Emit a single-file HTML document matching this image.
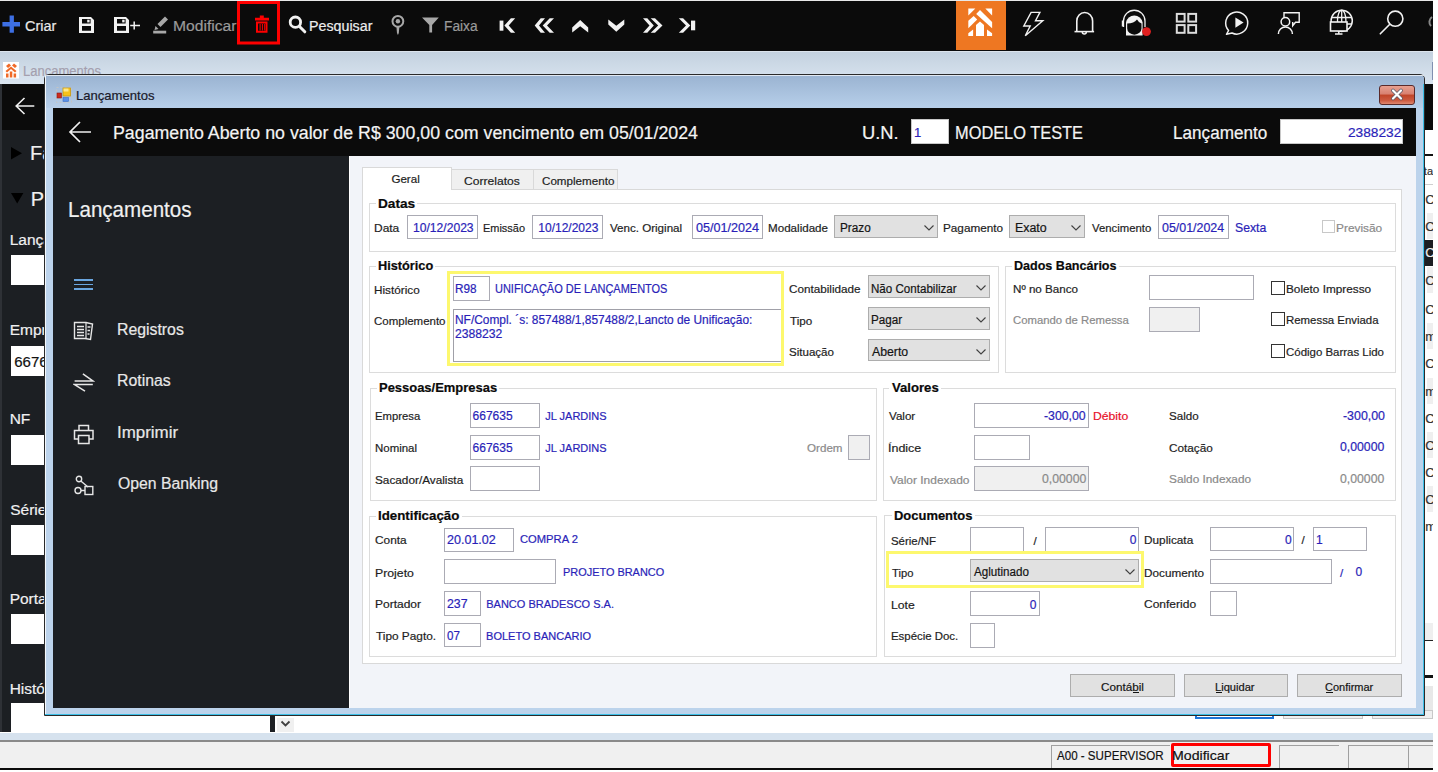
<!DOCTYPE html>
<html><head><meta charset="utf-8"><style>
html,body{margin:0;padding:0;}
body{width:1438px;height:772px;position:relative;overflow:hidden;background:#ffffff;font-family:"Liberation Sans",sans-serif;}
.t{position:absolute;white-space:nowrap;line-height:1;transform-origin:0 0;-webkit-text-stroke:0.2px currentColor;}
.b{position:absolute;box-sizing:border-box;}
</style></head><body>

<div class="b" style="left:0px;top:0px;width:1438px;height:1px;background:#e8e8e8;"></div>
<div class="b" style="left:0px;top:1px;width:1433px;height:50px;background:#0b0b0b;"></div>
<div class="b" style="left:0px;top:51px;width:1433px;height:33px;background:linear-gradient(#c3d1df,#dae5f0);"></div>
<div class="b" style="left:0px;top:51px;width:1433px;height:1px;background:#dce4ec;"></div>
<div class="b" style="left:0px;top:84px;width:1433px;height:648px;background:#ffffff;"></div>
<div class="b" style="left:0px;top:84px;width:44px;height:46px;background:#0b0b0b;"></div>
<div class="b" style="left:0px;top:130px;width:44px;height:602px;background:#1c1f23;"></div>
<div class="b" style="left:0px;top:84px;width:2px;height:648px;background:#2e3136;"></div>
<div class="b" style="left:1425px;top:84px;width:8px;height:46px;background:#0b0b0b;"></div>
<div class="b" style="left:0px;top:733px;width:1433px;height:7px;background:#d6e2ee;"></div>
<div class="b" style="left:0px;top:740px;width:1433px;height:2px;background:#8a8a8a;"></div>
<div class="b" style="left:0px;top:742px;width:1433px;height:26px;background:#f0f0f0;"></div>
<div class="b" style="left:0px;top:768px;width:1433px;height:2px;background:#0b0b0b;"></div>
<svg class="b" style="left:3px;top:62px" width="17" height="17" viewBox="0 0 17 17"><rect x="0" y="0" width="16" height="16.5" fill="#ffffff"/><path d="M3 4 L6 1.5 L8 3.5 L5 6 Z M9 3.5 L11 1.5 L14 4 L12 6 Z M2.5 9 L8 4.5 L13.5 9 L12 10.5 L8 7 L4 10.5 Z M3 11.5h2.5v4H3z M6.8 9.5h2.5v6H6.8z M10.6 11.5h2.5v4h-2.5z" fill="#f06a28"/></svg>
<div class="t" style="left:23.36px;top:64.40px;font-size:14px;color:#a49fae;transform:scaleX(0.9289);">Lançamentos</div>
<svg class="b" style="left:14px;top:96px" width="22" height="20" viewBox="0 0 22 20"><path d="M2.2 10 H20.3 M10.5 2 L2.2 10 L10.5 18" fill="none" stroke="#f0f0f0" stroke-width="1.6"/></svg>
<svg class="b" style="left:11px;top:147px" width="12" height="13" viewBox="0 0 12 13"><path d="M0 0 L11 6.3 L0 12.6 Z" fill="#000000"/></svg>
<div class="t" style="left:30.10px;top:143.30px;font-size:20px;color:#f0f0f0;">Faturas</div>
<svg class="b" style="left:11px;top:193px" width="13" height="11" viewBox="0 0 13 11"><path d="M0 0 H12.4 L6.2 10.5 Z" fill="#000000"/></svg>
<div class="t" style="left:30.80px;top:189.00px;font-size:20px;color:#f0f0f0;">Pesquisa</div>
<div class="t" style="left:9.66px;top:232.12px;font-size:15.5px;color:#f0f0f0;">Lançamento</div>
<div class="t" style="left:9.66px;top:322.22px;font-size:15.5px;color:#f0f0f0;">Empresa</div>
<div class="t" style="left:9.66px;top:411.43px;font-size:15.5px;color:#f0f0f0;">NF</div>
<div class="t" style="left:10.20px;top:501.53px;font-size:15.5px;color:#f0f0f0;">Série</div>
<div class="t" style="left:9.66px;top:590.53px;font-size:15.5px;color:#f0f0f0;">Portador</div>
<div class="t" style="left:9.66px;top:680.62px;font-size:15.5px;color:#f0f0f0;">Histórico</div>
<div class="b" style="left:11px;top:255px;width:40px;height:30px;background:#ffffff;"></div>
<div class="b" style="left:11px;top:346px;width:40px;height:30px;background:#ffffff;"></div>
<div class="b" style="left:11px;top:435px;width:40px;height:30px;background:#ffffff;"></div>
<div class="b" style="left:11px;top:525px;width:40px;height:30px;background:#ffffff;"></div>
<div class="b" style="left:11px;top:614px;width:40px;height:30px;background:#ffffff;"></div>
<div class="t" style="left:14.25px;top:353.75px;font-size:15px;color:#111111;">667635</div>
<div class="b" style="left:11px;top:703px;width:259px;height:29px;background:#ffffff;"></div>
<div class="b" style="left:270px;top:715px;width:5px;height:17px;background:#1c1f23;"></div>
<div class="b" style="left:277px;top:718px;width:17px;height:14px;background:#f0f0f0;"></div>
<svg class="b" style="left:280px;top:720px" width="11" height="8" viewBox="0 0 11 8"><path d="M1.5 1.5 L5.5 5.5 L9.5 1.5" fill="none" stroke="#404040" stroke-width="1.8"/></svg>
<div class="b" style="left:1195px;top:710px;width:79px;height:9px;background:transparent;border:2px solid #1a73d9;"></div>
<div class="b" style="left:1283px;top:710px;width:80px;height:9px;background:#f0f0f0;border:1px solid #c8c8c8;"></div>
<div class="b" style="left:1372px;top:710px;width:61px;height:9px;background:#f0f0f0;border:1px solid #c8c8c8;"></div>
<div class="b" style="left:1425px;top:154px;width:8px;height:2px;background:#111111;"></div>
<div class="t" style="left:1423.84px;top:166.35px;font-size:11px;color:#333333;">ta</div>
<div class="b" style="left:1425px;top:184px;width:8px;height:1px;background:#cfcfcf;"></div>
<div class="t" style="left:1425.35px;top:192.95px;font-size:13px;color:#333333;">C</div>
<div class="b" style="left:1427px;top:213px;width:6px;height:26px;background:#efefef;"></div>
<div class="t" style="left:1425.35px;top:219.95px;font-size:13px;color:#333333;">C</div>
<div class="b" style="left:1425px;top:240px;width:8px;height:26px;background:#1c1f23;"></div>
<div class="t" style="left:1425.35px;top:245.95px;font-size:13px;color:#f0f0f0;">C</div>
<div class="b" style="left:1427px;top:267px;width:6px;height:26px;background:#efefef;"></div>
<div class="t" style="left:1425.35px;top:273.95px;font-size:13px;color:#333333;">C</div>
<div class="t" style="left:1425.35px;top:302.95px;font-size:13px;color:#333333;">C</div>
<div class="b" style="left:1427px;top:323px;width:6px;height:26px;background:#efefef;"></div>
<div class="t" style="left:1425.15px;top:329.95px;font-size:13px;color:#333333;">m</div>
<div class="t" style="left:1425.35px;top:356.95px;font-size:13px;color:#333333;">C</div>
<div class="b" style="left:1427px;top:378px;width:6px;height:26px;background:#efefef;"></div>
<div class="t" style="left:1425.15px;top:384.95px;font-size:13px;color:#333333;">m</div>
<div class="t" style="left:1425.35px;top:411.95px;font-size:13px;color:#333333;">C</div>
<div class="b" style="left:1427px;top:432px;width:6px;height:26px;background:#efefef;"></div>
<div class="t" style="left:1425.35px;top:438.95px;font-size:13px;color:#333333;">C</div>
<div class="t" style="left:1425.35px;top:465.95px;font-size:13px;color:#333333;">C</div>
<div class="b" style="left:1427px;top:486px;width:6px;height:26px;background:#efefef;"></div>
<div class="t" style="left:1425.35px;top:492.95px;font-size:13px;color:#333333;">C</div>
<div class="t" style="left:1425.15px;top:519.95px;font-size:13px;color:#333333;">m</div>
<div class="b" style="left:1425px;top:623px;width:8px;height:17px;background:#efefef;"></div>
<div class="b" style="left:1425px;top:640px;width:8px;height:1px;background:#222222;"></div>
<div class="b" style="left:1425px;top:675px;width:8px;height:3px;background:#111111;"></div>
<div class="b" style="left:1425px;top:686px;width:8px;height:24px;background:#e8e8e8;"></div>
<div class="b" style="left:1051px;top:745px;width:119px;height:23px;background:transparent;border:none;border-left:1px solid #a0a0a0;border-top:1px solid #a0a0a0;"></div>
<div class="t" style="left:1057.00px;top:748.52px;font-size:13.5px;color:#111111;transform:scaleX(0.8572);">A00 - SUPERVISOR</div>
<div class="b" style="left:1171px;top:743px;width:100px;height:24px;background:transparent;border:3px solid #ff0000;border-radius:2px;"></div>
<div class="t" style="left:1171.87px;top:748.52px;font-size:13.5px;color:#111111;transform:scaleX(1.0475);">Modificar</div>
<div class="b" style="left:1279px;top:745px;width:1px;height:23px;background:#a0a0a0;"></div>
<div class="b" style="left:1279px;top:745px;width:60px;height:1px;background:#a0a0a0;"></div>
<div class="b" style="left:1348px;top:745px;width:1px;height:23px;background:#a0a0a0;"></div>
<div class="b" style="left:1348px;top:745px;width:60px;height:1px;background:#a0a0a0;"></div>
<div class="b" style="left:1408px;top:745px;width:1px;height:23px;background:#a0a0a0;"></div>
<div class="b" style="left:1408px;top:745px;width:60px;height:1px;background:#a0a0a0;"></div>
<div class="b" style="left:44px;top:74px;width:1381px;height:642px;background:#bcd3ec;border:1px solid #2a2a2a;border-radius:5px 5px 0 0;"></div>
<div class="b" style="left:45px;top:75px;width:1379px;height:33px;background:linear-gradient(#9ab3d1,#b7cfea);border-radius:4px 4px 0 0;"></div>
<div class="b" style="left:45px;top:75px;width:1379px;height:1px;background:rgba(255,255,255,0.7);border-radius:4px 4px 0 0;"></div>
<div class="b" style="left:1423px;top:84px;width:1px;height:631px;background:#3cc0e8;"></div>
<div class="b" style="left:45px;top:714px;width:1379px;height:1px;background:#3cc0e8;"></div>
<div class="b" style="left:45px;top:76px;width:1px;height:638px;background:#f4f8fc;"></div>
<div class="b" style="left:1432px;top:62px;width:1px;height:18px;background:#8090b0;"></div>
<div class="b" style="left:53px;top:108px;width:1363px;height:48px;background:#0b0b0b;"></div>
<div class="b" style="left:53px;top:156px;width:296px;height:552px;background:#1c1f23;"></div>
<div class="b" style="left:349px;top:156px;width:1067px;height:552px;background:#f2f4f9;"></div>
<div class="b" style="left:349px;top:156px;width:1px;height:552px;background:#ffffff;"></div>
<div class="t" style="left:25.08px;top:18.70px;font-size:14px;color:#e8e8e8;transform:scaleX(1.0340);">Criar</div>
<div class="t" style="left:173.25px;top:18.70px;font-size:14px;color:#9a9a9a;transform:scaleX(1.1183);">Modificar</div>
<div class="b" style="left:236.5px;top:1px;width:43.5px;height:44px;background:#0b0b0b;"></div>
<div class="t" style="left:309.16px;top:18.70px;font-size:14px;color:#ededed;transform:scaleX(1.0181);">Pesquisar</div>
<div class="t" style="left:443.90px;top:18.70px;font-size:14px;color:#9a9a9a;transform:scaleX(0.9816);">Faixa</div>
<svg class="b" style="left:0;top:0" width="1438" height="50" viewBox="0 0 1438 50"><path d="M9.6 15.6h4.3v17.2h-4.3z M2.4 22.1h17.6v4.3H2.4z" fill="#3d6fe4"/><path fill="#f2f2f2" fill-rule="evenodd" d="M79 17h12l3 3v13h-15z M82 19v4.6h8.6v-4.6z M82 26v4.7h9v-4.7z"/><rect x="87.2" y="19.7" width="2.4" height="2.7" fill="#f2f2f2"/><path fill="#f2f2f2" fill-rule="evenodd" d="M114 17h12l3 3v13h-15z M117 19v4.6h8.6v-4.6z M117 26v4.7h9v-4.7z"/><rect x="122.2" y="19.7" width="2.4" height="2.7" fill="#f2f2f2"/><path d="M134.2 21.5v8 M130.2 25.5h9.8" stroke="#f2f2f2" stroke-width="1.5"/><path d="M157.5 24 L165 16.5 L168 19.5 L160.5 27 Z" fill="#a8a8a8"/><path d="M155.5 26 L158.5 29 L154.5 30 Z" fill="#a8a8a8"/><rect x="153.2" y="30.7" width="13" height="2.8" fill="#a8a8a8"/><rect x="238.5" y="2.5" width="40" height="40.5" fill="none" stroke="#ff0000" stroke-width="3"/><path fill="#ff0000" d="M255 17.8h14v2.8h-14z M259.8 15.5h4v2.5h-4z" /><path fill="#ff0000" fill-rule="evenodd" d="M256 21.4h11.5v11.4H256z M258 23.5v7.3h7.5v-7.3z"/><path fill="#ff0000" d="M259.6 24h1v6.5h-1z M261.9 24h1v6.5h-1z M264.2 24h.8v6.5h-.8z"/><circle cx="295.4" cy="22.2" r="5.2" fill="none" stroke="#f2f2f2" stroke-width="2.8"/><path d="M299.5 26.5 L304.8 31.8" stroke="#f2f2f2" stroke-width="3" stroke-linecap="round"/><circle cx="397.9" cy="21.3" r="5.4" fill="none" stroke="#a8a8a8" stroke-width="2"/><circle cx="397.9" cy="21.3" r="2.2" fill="#a8a8a8"/><path d="M396.4 26.5h3l-0.6 6.5-0.9 2-0.9-2z" fill="#a8a8a8"/><path d="M422 17.4h16.8l-6.7 7.5v7.5h-2.8v-7.5z" fill="#a8a8a8"/><rect x="499.6" y="20.6" width="3.8" height="10.1" fill="#f2f2f2"/><path fill="#f2f2f2" d="M504.4 25.5 L510.8999999999999 18.2 L515.1999999999999 18.2 L508.7 25.5 L515.1999999999999 32.8 L510.8999999999999 32.8 Z"/><path fill="#f2f2f2" d="M534.7 25.5 L540.7 18.2 L545.0 18.2 L539.0 25.5 L545.0 32.8 L540.7 32.8 Z"/><path fill="#f2f2f2" d="M542.7 25.5 L549.7 18.2 L554.0 18.2 L547.0 25.5 L554.0 32.8 L549.7 32.8 Z"/><path fill="#f2f2f2" d="M572.2 27.6 L580.2 19.9 L588.2 27.6 L588.2 32.4 L580.2 26.2 L572.2 32.4 Z"/><path fill="#f2f2f2" d="M608.3 19.6 L616.3 25.8 L624.3 19.6 L624.3 24.4 L616.3 31.7 L608.3 24.4 Z"/><path fill="#f2f2f2" d="M653.8 25.5 L647.3 18.2 L643.0 18.2 L649.5 25.5 L643.0 32.8 L647.3 32.8 Z"/><path fill="#f2f2f2" d="M662.5 25.5 L655.0 18.2 L650.7 18.2 L658.2 25.5 L650.7 32.8 L655.0 32.8 Z"/><path fill="#f2f2f2" d="M690.3 25.5 L683.0999999999999 18.2 L678.8 18.2 L686.0 25.5 L678.8 32.8 L683.0999999999999 32.8 Z"/><rect x="691" y="20.6" width="4.2" height="9.7" fill="#f2f2f2"/><rect x="956" y="1" width="50" height="49" fill="#ee7722"/><path d="M968.3 8.6 L975.3 8.6 L968.3 15.6 Z" fill="#ffffff"/><path d="M985.3 8.6 L992.1 8.6 L992.1 15.6 Z" fill="#ffffff"/><path d="M976.2 14.0 L980.0 9.9 L992.1 22.0 L992.1 28.3 Z" fill="#ffffff"/><path d="M968.3 20.7 L973.7 15.9 L977.2 19.4 L968.3 28.3 Z" fill="#ffffff"/><path d="M976.0 35.9 L976.0 25.1 L980.0 21.4 L984.0 25.1 L984.0 35.9 Z" fill="#ffffff"/><path d="M968.3 35.9 L968.3 33.2 L973.1 29.4 L973.1 35.9 Z" fill="#ffffff"/><path d="M987.0 29.4 L992.1 33.2 L992.1 35.9 L987.0 35.9 Z" fill="#ffffff"/><path d="M1031.1 12.4 L1039.9 12.4 L1035.5 20.7 L1042.8 20.7 L1025.3 35.8 L1030.2 26 L1023.8 26 Z" fill="none" stroke="#f2f2f2" stroke-width="1.4" stroke-linejoin="miter"/><path d="M1076.8 31.2 V21 A7.7 8.3 0 0 1 1092.6 21 V31.2" fill="none" stroke="#f2f2f2" stroke-width="1.6"/><path d="M1074.5 31.6h19.6" stroke="#f2f2f2" stroke-width="1.6"/><path d="M1082.3 32 a2 2 0 0 0 4 0" fill="none" stroke="#f2f2f2" stroke-width="1.5"/><path d="M1123.5 27 V21 A10.5 10.5 0 0 1 1145 21 V27" fill="none" stroke="#f2f2f2" stroke-width="1.3"/><path d="M1126 35.5 V22.5 A8.4 8.4 0 0 1 1142.6 22.5 V35.5 Z" fill="#f2f2f2"/><path d="M1127.2 23.5 Q1134 23.5 1137 19.5 Q1139 23 1141.5 23.5 V28.5 A7 6 0 0 1 1127.2 28.5 Z" fill="#0b0b0b"/><rect x="1121.8" y="20.5" width="2.2" height="6" fill="#f2f2f2"/><circle cx="1146.5" cy="31.6" r="4.4" fill="#e02020"/><rect x="1176.8" y="13.9" width="7.8" height="7.7" fill="none" stroke="#dddddd" stroke-width="2"/><rect x="1176.8" y="25.1" width="7.8" height="7.7" fill="none" stroke="#dddddd" stroke-width="2"/><rect x="1188.3" y="13.9" width="7.8" height="7.7" fill="none" stroke="#dddddd" stroke-width="2"/><rect x="1188.3" y="25.1" width="7.8" height="7.7" fill="none" stroke="#dddddd" stroke-width="2"/><path d="M1228.6 30.5 A11 11 0 1 1 1232 33 L1226.5 34.3 Z" fill="none" stroke="#f2f2f2" stroke-width="1.5" stroke-linejoin="round"/><path d="M1235.4 17.6 L1243.6 22.6 L1235.4 27.8 Z" fill="#f2f2f2"/><circle cx="1285.4" cy="21.8" r="4.3" fill="none" stroke="#f2f2f2" stroke-width="1.5"/><path d="M1278.4 34 A7 7 0 0 1 1292.4 34" fill="none" stroke="#f2f2f2" stroke-width="1.5"/><path d="M1284 17 V12.8 H1299.2 V22.2 H1295.5 L1292.7 25.8 V22" fill="none" stroke="#f2f2f2" stroke-width="1.4"/><circle cx="1341.7" cy="20.8" r="10.6" fill="none" stroke="#f2f2f2" stroke-width="1.5"/><ellipse cx="1341.7" cy="20.8" rx="4.2" ry="10.6" fill="none" stroke="#f2f2f2" stroke-width="1.3"/><path d="M1331.5 17.5 H1352 M1331.5 24 H1352 M1341.7 10.2 V31.4" stroke="#f2f2f2" stroke-width="1.3"/><rect x="1330.5" y="22" width="16.5" height="9" fill="#0b0b0b" stroke="#f2f2f2" stroke-width="1.6"/><path d="M1338.8 31 V33.5 M1335 34 H1342.5" stroke="#f2f2f2" stroke-width="1.5"/><circle cx="1395.3" cy="18.7" r="7.6" fill="none" stroke="#f2f2f2" stroke-width="1.6"/><path d="M1389.8 24.2 L1380.3 33.8" stroke="#f2f2f2" stroke-width="1.6" stroke-linecap="round"/><path d="M1432 17 A6 6 0 0 0 1431 26" fill="none" stroke="#888888" stroke-width="2"/></svg>
<svg class="b" style="left:56px;top:87px" width="16" height="16" viewBox="0 0 16 16"><rect x="0.5" y="0.5" width="15" height="15" fill="none" stroke="#c9c4bd" stroke-width="0.8" stroke-dasharray="2 2"/><rect x="7" y="1" width="7.5" height="8" fill="#f6c21a" stroke="#c99a10" stroke-width="0.8"/><rect x="7.5" y="1.5" width="5" height="3" fill="#fde88a"/><rect x="1" y="6" width="4.5" height="5" fill="#cc2a1e" stroke="#8a1810" stroke-width="0.6"/><rect x="7" y="10.5" width="5.5" height="4" fill="#5a90e8" stroke="#3d6fc0" stroke-width="0.6"/></svg>
<div class="b" style="left:1379px;top:85px;width:36px;height:20px;border:1px solid #5a2a2a;border-radius:3px;background:linear-gradient(#e8a090 0%,#d88070 45%,#c04428 50%,#cc5a40 80%,#e08870 100%);"></div>
<svg class="b" style="left:1390px;top:88px" width="14" height="13" viewBox="0 0 14 13"><path d="M3 2.5 L11 10.5 M11 2.5 L3 10.5" stroke="#5a5a6a" stroke-width="3.6" stroke-linecap="round"/><path d="M3 2.5 L11 10.5 M11 2.5 L3 10.5" stroke="#ffffff" stroke-width="2.2" stroke-linecap="round"/></svg>
<svg class="b" style="left:68px;top:120px" width="25" height="24" viewBox="0 0 25 24"><path d="M2 12 H23 M12 2 L2 12 L12 22" fill="none" stroke="#f0f0f0" stroke-width="1.7"/></svg>
<div class="b" style="left:74.4px;top:279px;width:19px;height:1.6px;background:#6aa6e0;"></div>
<div class="b" style="left:74.4px;top:283.5px;width:19px;height:1.6px;background:#6aa6e0;"></div>
<div class="b" style="left:74.4px;top:288px;width:19px;height:1.6px;background:#6aa6e0;"></div>
<svg class="b" style="left:73px;top:321px" width="22" height="20" viewBox="0 0 22 20"><path d="M1.5 1.5 H13 L19.5 3 L17.5 18.5 L12 17.5 H1.5 Z" fill="none" stroke="#e6e6e6" stroke-width="1.4"/><path d="M13 1.5 V17.5" stroke="#e6e6e6" stroke-width="1.2"/><path d="M4 5.5 H11 M4 8.5 H11 M4 11.5 H11 M4 14.5 H11 M14.5 6 H17.5 M14.5 9.5 H17 M14.5 13 H16.5" stroke="#e6e6e6" stroke-width="1.3"/></svg>
<svg class="b" style="left:73px;top:372px" width="22" height="22" viewBox="0 0 22 22"><path d="M1.6 8.9 H19.8 L9.9 1.9" fill="none" stroke="#e6e6e6" stroke-width="1.5" stroke-linejoin="miter"/><path d="M19.8 12.6 H1.6 L12 19.2" fill="none" stroke="#e6e6e6" stroke-width="1.5" stroke-linejoin="miter"/></svg>
<svg class="b" style="left:73px;top:424px" width="22" height="21" viewBox="0 0 22 21"><path d="M6 6.5 V1.5 H15.5 V6.5" fill="none" stroke="#e6e6e6" stroke-width="1.5"/><path d="M5.5 15 H1.5 V6.5 H20 V15 H16" fill="none" stroke="#e6e6e6" stroke-width="1.5"/><path d="M5.5 11.5 H16 V19.5 H5.5 Z" fill="none" stroke="#e6e6e6" stroke-width="1.5"/></svg>
<svg class="b" style="left:73px;top:475px" width="22" height="21" viewBox="0 0 22 21"><circle cx="6" cy="4" r="2.7" fill="none" stroke="#e6e6e6" stroke-width="1.4"/><circle cx="5" cy="15.5" r="3" fill="none" stroke="#e6e6e6" stroke-width="1.4"/><path d="M7.8 6 L15 12 M8 15.5 H12" stroke="#e6e6e6" stroke-width="1.4"/><rect x="12" y="11.5" width="7.8" height="8" fill="none" stroke="#e6e6e6" stroke-width="1.4"/></svg>
<div class="t" style="left:75.95px;top:89.45px;font-size:13px;color:#1a1a2a;transform:scaleX(1.0056);">Lançamentos</div>
<div class="t" style="left:112.78px;top:123.80px;font-size:18px;color:#f4f4f4;transform:scaleX(0.9875);">Pagamento Aberto no valor de R$ 300,00 com vencimento em 05/01/2024</div>
<div class="t" style="left:861.62px;top:123.80px;font-size:18px;color:#f4f4f4;transform:scaleX(1.0200);">U.N.</div>
<div class="b" style="left:911px;top:119px;width:38px;height:25px;background:#ffffff;border:1px solid #c8c8c8;"></div>
<div class="t" style="left:914.02px;top:126.45px;font-size:13px;color:#2a1fb8;">1</div>
<div class="t" style="left:954.69px;top:123.80px;font-size:18px;color:#f4f4f4;transform:scaleX(0.9097);">MODELO TESTE</div>
<div class="t" style="left:1173.13px;top:123.80px;font-size:18px;color:#f4f4f4;transform:scaleX(0.9512);">Lançamento</div>
<div class="b" style="left:1280px;top:119px;width:123px;height:25px;background:#ffffff;border:1px solid #c8c8c8;"></div>
<div class="t" style="left:1348.32px;top:126.45px;font-size:13px;color:#2a1fb8;transform:scaleX(1.0534);">2388232</div>
<div class="t" style="left:68.15px;top:198.90px;font-size:22px;color:#f0f0f0;transform:scaleX(0.9353);">Lançamentos</div>
<div class="t" style="left:117.48px;top:322.10px;font-size:16px;color:#e8e8e8;transform:scaleX(0.9884);">Registros</div>
<div class="t" style="left:117.48px;top:372.65px;font-size:16px;color:#e8e8e8;transform:scaleX(0.9895);">Rotinas</div>
<div class="t" style="left:117.23px;top:424.60px;font-size:16px;color:#e8e8e8;transform:scaleX(1.0574);">Imprimir</div>
<div class="t" style="left:118.04px;top:475.80px;font-size:16px;color:#e8e8e8;transform:scaleX(0.9859);">Open Banking</div>
<div class="b" style="left:362px;top:189px;width:1040px;height:475px;background:#ffffff;border:1px solid #d9d9d9;"></div>
<div class="b" style="left:451px;top:169px;width:83px;height:21px;background:#f0f0f0;border:1px solid #d9d9d9;"></div>
<div class="b" style="left:533px;top:169px;width:85px;height:21px;background:#f0f0f0;border:1px solid #d9d9d9;"></div>
<div class="b" style="left:362px;top:167px;width:90px;height:23px;background:#ffffff;border:1px solid #d9d9d9;border-bottom:none;"></div>
<div class="t" style="left:391.42px;top:172.54px;font-size:11.6px;color:#1e1e1e;">Geral</div>
<div class="t" style="left:463.60px;top:175.14px;font-size:11.6px;color:#1e1e1e;transform:scaleX(1.0429);">Correlatos</div>
<div class="t" style="left:541.82px;top:175.14px;font-size:11.6px;color:#1e1e1e;transform:scaleX(1.0033);">Complemento</div>
<div class="b" style="left:369px;top:203px;width:1027px;height:49px;background:transparent;border:1px solid #dcdcdc;"></div>
<div class="b" style="left:375.6px;top:201px;width:41.8px;height:5px;background:#ffffff;"></div>
<div class="t" style="left:377.71px;top:197.78px;font-size:12.5px;color:#0a0a0a;font-weight:bold;transform:scaleX(1.0931);">Datas</div>
<div class="t" style="left:373.74px;top:222.14px;font-size:11.6px;color:#1e1e1e;transform:scaleX(1.0319);">Data</div>
<div class="b" style="left:407px;top:215px;width:71px;height:24px;background:#ffffff;border:1px solid #ababb4;"></div>
<div class="t" style="left:412.59px;top:221.80px;font-size:12px;color:#2a1fb8;transform:scaleX(1.0089);">10/12/2023</div>
<div class="t" style="left:483.12px;top:222.14px;font-size:11.6px;color:#1e1e1e;transform:scaleX(0.9444);">Emissão</div>
<div class="b" style="left:532px;top:215px;width:71px;height:24px;background:#ffffff;border:1px solid #ababb4;"></div>
<div class="t" style="left:538.30px;top:221.80px;font-size:12px;color:#2a1fb8;">10/12/2023</div>
<div class="t" style="left:609.94px;top:222.14px;font-size:11.6px;color:#1e1e1e;">Venc. Original</div>
<div class="b" style="left:692px;top:215px;width:71px;height:24px;background:#ffffff;border:1px solid #ababb4;"></div>
<div class="t" style="left:696.20px;top:221.80px;font-size:12px;color:#2a1fb8;transform:scaleX(1.0486);">05/01/2024</div>
<div class="t" style="left:768.07px;top:222.14px;font-size:11.6px;color:#1e1e1e;">Modalidade</div>
<div class="b" style="left:834px;top:215px;width:104px;height:23px;background:#e1e1e1;border:1px solid #adadad;"></div>
<div class="t" style="left:839.86px;top:221.80px;font-size:12px;color:#141414;transform:scaleX(0.9806);">Prazo</div>
<svg class="b" style="left:922.7px;top:223.5px" width="12" height="8" viewBox="0 0 12 8"><path d="M1.5 1.5 L6 6 L10.5 1.5" fill="none" stroke="#404040" stroke-width="1.1"/></svg>
<div class="t" style="left:943.06px;top:222.14px;font-size:11.6px;color:#1e1e1e;transform:scaleX(1.0131);">Pagamento</div>
<div class="b" style="left:1009px;top:215px;width:76px;height:23px;background:#e1e1e1;border:1px solid #adadad;"></div>
<div class="t" style="left:1014.91px;top:221.80px;font-size:12px;color:#141414;transform:scaleX(1.0335);">Exato</div>
<svg class="b" style="left:1069.7px;top:223.5px" width="12" height="8" viewBox="0 0 12 8"><path d="M1.5 1.5 L6 6 L10.5 1.5" fill="none" stroke="#404040" stroke-width="1.1"/></svg>
<div class="t" style="left:1091.94px;top:222.14px;font-size:11.6px;color:#1e1e1e;transform:scaleX(0.9769);">Vencimento</div>
<div class="b" style="left:1158px;top:215px;width:71px;height:24px;background:#ffffff;border:1px solid #ababb4;"></div>
<div class="t" style="left:1162.30px;top:221.80px;font-size:12px;color:#2a1fb8;transform:scaleX(1.0351);">05/01/2024</div>
<div class="t" style="left:1235.15px;top:221.80px;font-size:12px;color:#2a1fb8;transform:scaleX(1.0193);">Sexta</div>
<div class="b" style="left:1322px;top:220px;width:13px;height:13px;background:#ffffff;border:1px solid #c8c8c8;"></div>
<div class="t" style="left:1336.05px;top:222.14px;font-size:11.6px;color:#8a8a8a;transform:scaleX(1.0244);">Previsão</div>
<div class="b" style="left:369px;top:266px;width:630px;height:107px;background:transparent;border:1px solid #dcdcdc;"></div>
<div class="b" style="left:375.6px;top:264px;width:59.9px;height:5px;background:#ffffff;"></div>
<div class="t" style="left:377.77px;top:259.77px;font-size:12.5px;color:#0a0a0a;font-weight:bold;transform:scaleX(1.0194);">Histórico</div>
<div class="t" style="left:373.76px;top:283.74px;font-size:11.6px;color:#1e1e1e;transform:scaleX(1.0130);">Histórico</div>
<div class="b" style="left:447px;top:271px;width:337px;height:95px;background:transparent;border:3px solid #fdf86e;"></div>
<div class="b" style="left:453px;top:276px;width:37px;height:25px;background:#ffffff;border:1px solid #ababb4;"></div>
<div class="t" style="left:454.76px;top:283.40px;font-size:12px;color:#2a1fb8;transform:scaleX(0.9815);">R98</div>
<div class="t" style="left:494.98px;top:283.40px;font-size:12px;color:#2a1fb8;transform:scaleX(0.9149);">UNIFICAÇÃO DE LANÇAMENTOS</div>
<div class="t" style="left:374.13px;top:314.84px;font-size:11.6px;color:#1e1e1e;transform:scaleX(0.9906);">Complemento</div>
<div class="b" style="left:453px;top:309px;width:328px;height:53px;background:#ffffff;border:1px solid #a0a0a8;border-right:none;"></div>
<div class="t" style="left:454.75px;top:314.10px;font-size:12px;color:#2a1fb8;transform:scaleX(0.9929);">NF/Compl. ´s: 857488/1,857488/2,Lancto de Unificação:</div>
<div class="t" style="left:455.09px;top:328.20px;font-size:12px;color:#2a1fb8;transform:scaleX(1.0136);">2388232</div>
<div class="t" style="left:789.41px;top:282.84px;font-size:11.6px;color:#1e1e1e;transform:scaleX(1.0096);">Contabilidade</div>
<div class="b" style="left:868px;top:275px;width:122px;height:23px;background:#e1e1e1;border:1px solid #adadad;"></div>
<div class="t" style="left:870.77px;top:282.50px;font-size:12px;color:#141414;transform:scaleX(0.9653);">Não Contabilizar</div>
<svg class="b" style="left:974.7px;top:283.5px" width="12" height="8" viewBox="0 0 12 8"><path d="M1.5 1.5 L6 6 L10.5 1.5" fill="none" stroke="#404040" stroke-width="1.1"/></svg>
<div class="t" style="left:789.77px;top:314.54px;font-size:11.6px;color:#1e1e1e;transform:scaleX(1.0046);">Tipo</div>
<div class="b" style="left:868px;top:307px;width:122px;height:23px;background:#e1e1e1;border:1px solid #adadad;"></div>
<div class="t" style="left:870.77px;top:314.20px;font-size:12px;color:#141414;transform:scaleX(0.9728);">Pagar</div>
<svg class="b" style="left:974.7px;top:315.5px" width="12" height="8" viewBox="0 0 12 8"><path d="M1.5 1.5 L6 6 L10.5 1.5" fill="none" stroke="#404040" stroke-width="1.1"/></svg>
<div class="t" style="left:789.48px;top:345.84px;font-size:11.6px;color:#1e1e1e;transform:scaleX(0.9969);">Situação</div>
<div class="b" style="left:868px;top:339px;width:122px;height:22px;background:#e1e1e1;border:1px solid #adadad;"></div>
<div class="t" style="left:871.70px;top:345.50px;font-size:12px;color:#141414;transform:scaleX(1.0241);">Aberto</div>
<svg class="b" style="left:974.7px;top:347.5px" width="12" height="8" viewBox="0 0 12 8"><path d="M1.5 1.5 L6 6 L10.5 1.5" fill="none" stroke="#404040" stroke-width="1.1"/></svg>
<div class="b" style="left:1005px;top:266px;width:391px;height:107px;background:transparent;border:1px solid #dcdcdc;"></div>
<div class="b" style="left:1011.5px;top:264px;width:107.2px;height:5px;background:#ffffff;"></div>
<div class="t" style="left:1013.68px;top:260.27px;font-size:12.5px;color:#0a0a0a;font-weight:bold;transform:scaleX(1.0038);">Dados Bancários</div>
<div class="t" style="left:1013.17px;top:282.74px;font-size:11.6px;color:#1e1e1e;transform:scaleX(1.0039);">Nº no Banco</div>
<div class="b" style="left:1149px;top:275px;width:105px;height:25px;background:#ffffff;border:1px solid #ababb4;"></div>
<div class="t" style="left:1013.43px;top:313.84px;font-size:11.6px;color:#8a8a8a;transform:scaleX(0.9769);">Comando de Remessa</div>
<div class="b" style="left:1149px;top:307px;width:51px;height:25px;background:#f0f0f0;border:1px solid #ababb4;"></div>
<div class="b" style="left:1271px;top:281px;width:14px;height:14px;background:#ffffff;border:1px solid #333333;"></div>
<div class="t" style="left:1286.06px;top:282.74px;font-size:11.6px;color:#1e1e1e;transform:scaleX(1.0156);">Boleto Impresso</div>
<div class="b" style="left:1271px;top:312px;width:14px;height:14px;background:#ffffff;border:1px solid #333333;"></div>
<div class="t" style="left:1286.09px;top:314.44px;font-size:11.6px;color:#1e1e1e;transform:scaleX(0.9838);">Remessa Enviada</div>
<div class="b" style="left:1271px;top:344px;width:14px;height:14px;background:#ffffff;border:1px solid #333333;"></div>
<div class="t" style="left:1286.43px;top:345.84px;font-size:11.6px;color:#1e1e1e;transform:scaleX(0.9873);">Código Barras Lido</div>
<div class="b" style="left:370px;top:388px;width:507px;height:113px;background:transparent;border:1px solid #dcdcdc;"></div>
<div class="b" style="left:376.5px;top:386px;width:122.7px;height:5px;background:#ffffff;"></div>
<div class="t" style="left:378.66px;top:382.48px;font-size:12.5px;color:#0a0a0a;font-weight:bold;transform:scaleX(1.0362);">Pessoas/Empresas</div>
<div class="t" style="left:374.70px;top:410.34px;font-size:11.6px;color:#1e1e1e;transform:scaleX(0.9742);">Empresa</div>
<div class="b" style="left:470px;top:403px;width:70px;height:25px;background:#ffffff;border:1px solid #ababb4;"></div>
<div class="t" style="left:472.60px;top:410.00px;font-size:12px;color:#2a1fb8;">667635</div>
<div class="t" style="left:545.34px;top:410.85px;font-size:11px;color:#2a1fb8;">JL JARDINS</div>
<div class="t" style="left:374.68px;top:442.04px;font-size:11.6px;color:#1e1e1e;transform:scaleX(0.9870);">Nominal</div>
<div class="b" style="left:470px;top:435px;width:70px;height:25px;background:#ffffff;border:1px solid #ababb4;"></div>
<div class="t" style="left:472.60px;top:441.70px;font-size:12px;color:#2a1fb8;">667635</div>
<div class="t" style="left:545.34px;top:442.55px;font-size:11px;color:#2a1fb8;">JL JARDINS</div>
<div class="t" style="left:375.07px;top:473.64px;font-size:11.6px;color:#1e1e1e;transform:scaleX(1.0162);">Sacador/Avalista</div>
<div class="b" style="left:470px;top:466px;width:70px;height:25px;background:#ffffff;border:1px solid #ababb4;"></div>
<div class="t" style="left:807.08px;top:442.44px;font-size:11.6px;color:#8a8a8a;">Ordem</div>
<div class="b" style="left:848px;top:435px;width:22px;height:25px;background:#f0f0f0;border:1px solid #ababb4;"></div>
<div class="b" style="left:883px;top:388px;width:513px;height:113px;background:transparent;border:1px solid #dcdcdc;"></div>
<div class="b" style="left:889px;top:386px;width:52.1px;height:5px;background:#ffffff;"></div>
<div class="t" style="left:891.93px;top:382.38px;font-size:12.5px;color:#0a0a0a;font-weight:bold;transform:scaleX(1.0507);">Valores</div>
<div class="t" style="left:889.04px;top:410.24px;font-size:11.6px;color:#1e1e1e;">Valor</div>
<div class="b" style="left:974px;top:403px;width:115px;height:25px;background:#ffffff;border:1px solid #ababb4;"></div>
<div class="t" style="left:1044.45px;top:409.90px;font-size:12px;color:#2a1fb8;transform:scaleX(1.0247);">-300,00</div>
<div class="t" style="left:1092.52px;top:410.24px;font-size:11.6px;color:#e8102a;transform:scaleX(1.0519);">Débito</div>
<div class="t" style="left:1168.98px;top:410.24px;font-size:11.6px;color:#1e1e1e;">Saldo</div>
<div class="t" style="left:1342.74px;top:409.50px;font-size:12px;color:#2a1fb8;transform:scaleX(1.0322);">-300,00</div>
<div class="t" style="left:888.23px;top:442.14px;font-size:11.6px;color:#1e1e1e;transform:scaleX(1.0751);">Índice</div>
<div class="b" style="left:974px;top:435px;width:56px;height:25px;background:#ffffff;border:1px solid #ababb4;"></div>
<div class="t" style="left:1168.91px;top:442.14px;font-size:11.6px;color:#1e1e1e;transform:scaleX(1.0150);">Cotação</div>
<div class="t" style="left:1340.41px;top:441.00px;font-size:12px;color:#2a1fb8;transform:scaleX(1.0217);">0,00000</div>
<div class="t" style="left:889.94px;top:473.54px;font-size:11.6px;color:#8a8a8a;transform:scaleX(1.0298);">Valor Indexado</div>
<div class="b" style="left:974px;top:466px;width:115px;height:25px;background:#f0f0f0;border:1px solid #ababb4;"></div>
<div class="t" style="left:1041.81px;top:473.20px;font-size:12px;color:#8a8a8a;transform:scaleX(1.0217);">0,00000</div>
<div class="t" style="left:1168.97px;top:473.44px;font-size:11.6px;color:#8a8a8a;transform:scaleX(1.0184);">Saldo Indexado</div>
<div class="t" style="left:1340.41px;top:473.10px;font-size:12px;color:#8a8a8a;transform:scaleX(1.0217);">0,00000</div>
<div class="b" style="left:369px;top:516px;width:508px;height:141px;background:transparent;border:1px solid #dcdcdc;"></div>
<div class="b" style="left:375.7px;top:514px;width:85.9px;height:5px;background:#ffffff;"></div>
<div class="t" style="left:377.84px;top:510.08px;font-size:12.5px;color:#0a0a0a;font-weight:bold;transform:scaleX(1.0644);">Identificação</div>
<div class="t" style="left:375.31px;top:533.94px;font-size:11.6px;color:#1e1e1e;transform:scaleX(1.0220);">Conta</div>
<div class="b" style="left:444px;top:528px;width:70px;height:24px;background:#ffffff;border:1px solid #ababb4;"></div>
<div class="t" style="left:446.87px;top:533.60px;font-size:12px;color:#2a1fb8;transform:scaleX(1.0444);">20.01.02</div>
<div class="t" style="left:519.64px;top:534.45px;font-size:11px;color:#2a1fb8;transform:scaleX(1.0177);">COMPRA 2</div>
<div class="t" style="left:374.92px;top:566.64px;font-size:11.6px;color:#1e1e1e;transform:scaleX(1.0588);">Projeto</div>
<div class="b" style="left:444px;top:559px;width:112px;height:25px;background:#ffffff;border:1px solid #ababb4;"></div>
<div class="t" style="left:562.53px;top:567.15px;font-size:11px;color:#2a1fb8;transform:scaleX(0.9932);">PROJETO BRANCO</div>
<div class="t" style="left:374.94px;top:598.14px;font-size:11.6px;color:#1e1e1e;transform:scaleX(1.0349);">Portador</div>
<div class="b" style="left:444px;top:591px;width:37px;height:25px;background:#ffffff;border:1px solid #ababb4;"></div>
<div class="t" style="left:446.88px;top:597.80px;font-size:12px;color:#2a1fb8;transform:scaleX(1.0277);">237</div>
<div class="t" style="left:486.22px;top:598.65px;font-size:11px;color:#2a1fb8;">BANCO BRADESCO S.A.</div>
<div class="t" style="left:375.66px;top:630.14px;font-size:11.6px;color:#1e1e1e;transform:scaleX(1.0209);">Tipo Pagto.</div>
<div class="b" style="left:444px;top:623px;width:37px;height:24px;background:#ffffff;border:1px solid #ababb4;"></div>
<div class="t" style="left:447.04px;top:629.80px;font-size:12px;color:#2a1fb8;transform:scaleX(0.9641);">07</div>
<div class="t" style="left:486.12px;top:630.65px;font-size:11px;color:#2a1fb8;">BOLETO BANCARIO</div>
<div class="b" style="left:884px;top:515px;width:512px;height:142px;background:transparent;border:1px solid #dcdcdc;"></div>
<div class="b" style="left:891.5px;top:513px;width:83.1px;height:5px;background:#ffffff;"></div>
<div class="t" style="left:893.66px;top:510.38px;font-size:12.5px;color:#0a0a0a;font-weight:bold;transform:scaleX(1.0366);">Documentos</div>
<div class="t" style="left:891.29px;top:534.54px;font-size:11.6px;color:#1e1e1e;transform:scaleX(0.9849);">Série/NF</div>
<div class="b" style="left:970px;top:527px;width:54px;height:25px;background:#ffffff;border:1px solid #ababb4;"></div>
<div class="t" style="left:1033.50px;top:534.54px;font-size:11.6px;color:#1e1e1e;">/</div>
<div class="b" style="left:1045px;top:527px;width:94px;height:25px;background:#ffffff;border:1px solid #ababb4;"></div>
<div class="t" style="left:1129.86px;top:534.20px;font-size:12px;color:#2a1fb8;">0</div>
<div class="b" style="left:886px;top:551px;width:258px;height:37px;background:transparent;border:3px solid #fdf86e;"></div>
<div class="t" style="left:891.58px;top:566.64px;font-size:11.6px;color:#1e1e1e;transform:scaleX(0.9672);">Tipo</div>
<div class="b" style="left:970px;top:559px;width:169px;height:23px;background:#e1e1e1;border:1px solid #adadad;"></div>
<div class="t" style="left:974.10px;top:566.30px;font-size:12px;color:#141414;transform:scaleX(0.9694);">Aglutinado</div>
<svg class="b" style="left:1123.7px;top:567.5px" width="12" height="8" viewBox="0 0 12 8"><path d="M1.5 1.5 L6 6 L10.5 1.5" fill="none" stroke="#404040" stroke-width="1.1"/></svg>
<div class="t" style="left:890.82px;top:598.84px;font-size:11.6px;color:#1e1e1e;transform:scaleX(1.0515);">Lote</div>
<div class="b" style="left:970px;top:591px;width:70px;height:25px;background:#ffffff;border:1px solid #ababb4;"></div>
<div class="t" style="left:1029.66px;top:598.50px;font-size:12px;color:#2a1fb8;">0</div>
<div class="t" style="left:890.89px;top:630.34px;font-size:11.6px;color:#1e1e1e;transform:scaleX(0.9841);">Espécie Doc.</div>
<div class="b" style="left:970px;top:623px;width:25px;height:25px;background:#ffffff;border:1px solid #ababb4;"></div>
<div class="t" style="left:1143.86px;top:534.14px;font-size:11.6px;color:#1e1e1e;transform:scaleX(1.0180);">Duplicata</div>
<div class="b" style="left:1210px;top:527px;width:84px;height:24px;background:#ffffff;border:1px solid #ababb4;"></div>
<div class="t" style="left:1284.96px;top:533.80px;font-size:12px;color:#2a1fb8;">0</div>
<div class="t" style="left:1301.60px;top:534.14px;font-size:11.6px;color:#1e1e1e;">/</div>
<div class="b" style="left:1313px;top:527px;width:54px;height:24px;background:#ffffff;border:1px solid #ababb4;"></div>
<div class="t" style="left:1316.10px;top:533.80px;font-size:12px;color:#2a1fb8;">1</div>
<div class="t" style="left:1143.86px;top:566.64px;font-size:11.6px;color:#1e1e1e;transform:scaleX(1.0131);">Documento</div>
<div class="b" style="left:1210px;top:559px;width:122px;height:25px;background:#ffffff;border:1px solid #ababb4;"></div>
<div class="t" style="left:1339.90px;top:566.64px;font-size:11.6px;color:#2a1fb8;">/</div>
<div class="t" style="left:1355.42px;top:566.30px;font-size:12px;color:#2a1fb8;">0</div>
<div class="t" style="left:1144.20px;top:598.14px;font-size:11.6px;color:#1e1e1e;transform:scaleX(1.0357);">Conferido</div>
<div class="b" style="left:1210px;top:591px;width:27px;height:25px;background:#ffffff;border:1px solid #ababb4;"></div>
<div class="b" style="left:1070px;top:674px;width:105px;height:23px;background:#e1e1e1;border:1px solid #adadad;"></div>
<div class="b" style="left:1184px;top:674px;width:104px;height:23px;background:#e1e1e1;border:1px solid #adadad;"></div>
<div class="b" style="left:1297px;top:674px;width:105px;height:23px;background:#e1e1e1;border:1px solid #adadad;"></div>
<div class="t" style="left:1100.92px;top:680.64px;font-size:11.6px;color:#141414;transform:scaleX(1.0078);">Contábil</div>
<div class="t" style="left:1214.61px;top:680.64px;font-size:11.6px;color:#141414;transform:scaleX(0.9592);">Liquidar</div>
<div class="t" style="left:1324.95px;top:680.64px;font-size:11.6px;color:#141414;transform:scaleX(0.9479);">Confirmar</div>
<div class="b" style="left:1133px;top:692px;width:6px;height:1px;background:#141414;"></div>
<div class="b" style="left:1215.5px;top:692px;width:6px;height:1px;background:#141414;"></div>
<div class="b" style="left:1326px;top:692px;width:7px;height:1px;background:#141414;"></div>
<div class="b" style="left:1433px;top:0px;width:5px;height:772px;background:#ffffff;"></div>
</body></html>
